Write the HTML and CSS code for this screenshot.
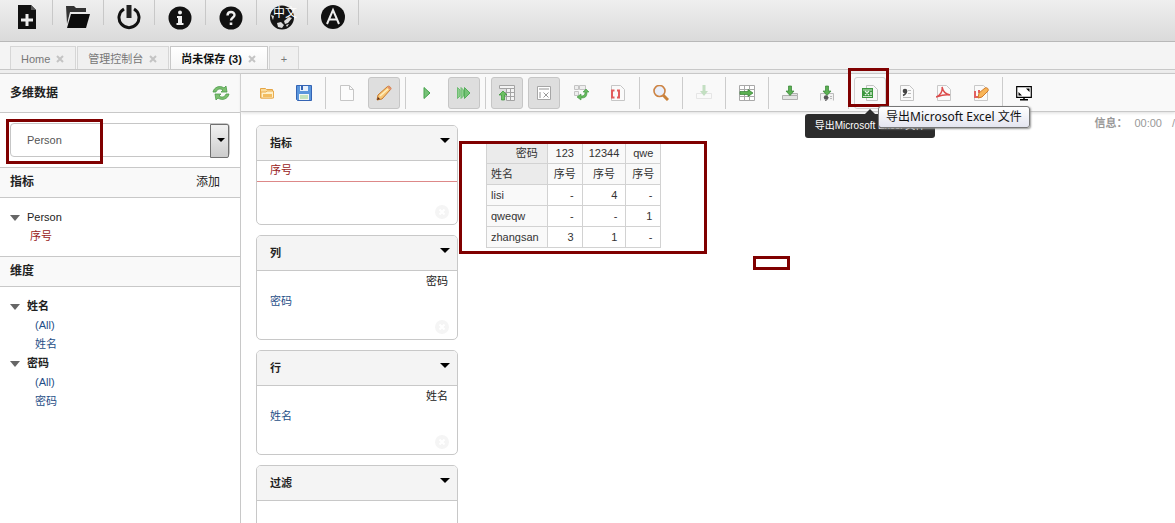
FILE: index.html
```html
<!DOCTYPE html>
<html lang="zh-CN">
<head>
<meta charset="utf-8">
<title>尚未保存 (3)</title>
<link rel="stylesheet" href="styles.css">
</head>
<body>
<div class="app">
  <header class="topbar">
    <button class="top-btn" aria-label="新建"><svg width="24" height="26" viewBox="0 0 24 26"><path d="M3 1h13l5 5v19H3z" fill="#111"/><path d="M16 1l5 5h-5z" fill="#555"/><path d="M12 10v12M6 16h12" stroke="#eee" stroke-width="3"/></svg></button>
    <button class="top-btn" aria-label="打开"><svg width="24" height="26" viewBox="0 0 24 26"><path d="M0 2h8l2 2h10v4H4L1 20z" fill="#333"/><path d="M5 10h19l-4 14H1z" fill="#0b0b0b"/></svg></button>
    <button class="top-btn" aria-label="退出"><svg width="24" height="26" viewBox="0 0 24 26"><path d="M7 5a10 10 0 1 0 10 0" fill="none" stroke="#111" stroke-width="3"/><path d="M12 1v13" stroke="#222" stroke-width="5"/></svg></button>
    <button class="top-btn" aria-label="信息"><svg width="24" height="26" viewBox="0 0 24 26"><circle cx="12" cy="14" r="11.5" fill="#111"/><circle cx="12" cy="8.500" r="2" fill="#eee"/><path d="M9 12h5v7h1.500v2h-7v-2H10v-5H9z" fill="#eee"/></svg></button>
    <button class="top-btn" aria-label="帮助"><svg width="24" height="26" viewBox="0 0 24 26"><circle cx="12" cy="14" r="11.5" fill="#111"/><path d="M8.500 11.500c0-4.500 7-4.500 7-.5 0 2.500-3.500 2.500-3.500 5.500" fill="none" stroke="#eee" stroke-width="2.400"/><path d="M10.700 18.500h2.600v2.500h-2.600z" fill="#eee"/></svg></button>
    <button class="top-btn lang" aria-label="语言"><svg width="24" height="26" viewBox="0 0 24 26"><circle cx="12" cy="13.500" r="12" fill="#161616"/><path d="M1 11l3 1-1 4zM7 19l4-1 3 3-2 3-4-1zM14 17l5-4 3 1-4 5-3 1zM16 21l3-1-2 3z" fill="#ddd"/></svg><span class="lang-text">中文</span></button>
    <button class="top-btn" aria-label="账户"><svg width="24" height="26" viewBox="0 0 24 26"><circle cx="12" cy="13" r="12" fill="#111"/><path d="M6 20l6-14 6 14M8.200 15.500h7.600" fill="none" stroke="#eee" stroke-width="2"/></svg></button>
  </header>

  <nav class="tabs">
    <a class="tab" href="#">Home<svg class="x" viewBox="0 0 8 8"><path d="M1 1l6 6M7 1L1 7"/></svg></a>
    <a class="tab" href="#">管理控制台<svg class="x" viewBox="0 0 8 8"><path d="M1 1l6 6M7 1L1 7"/></svg></a>
    <a class="tab active" href="#">尚未保存 (3)<svg class="x" viewBox="0 0 8 8"><path d="M1 1l6 6M7 1L1 7"/></svg></a>
    <a class="tab add" href="#">+</a>
  </nav>

  <div class="workspace">
    <aside class="sidebar">
      <div class="side-title"><h2>多维数据</h2>
        <button class="refresh" aria-label="刷新"><svg width="18" height="16" viewBox="0 0 18 16"><path d="M1 7c1-5 7-7 11-4l2-2 1 6H9l2-2C8 3 5 4 4 7z" fill="#7cc06f" stroke="#4c9a4c" stroke-width=".8"/><path d="M17 9c-1 5-7 7-11 4l-2 2-1-6h6l-2 2c3 2 6 1 7-2z" fill="#7cc06f" stroke="#4c9a4c" stroke-width=".8"/></svg></button>
      </div>
      <div class="cube">
        <div class="combo"><select aria-label="多维数据"><option>Person</option></select></div>
        <span class="mark mark-cube"></span>
      </div>
      <div class="side-head"><h2>指标</h2><button class="link-btn">添加</button></div>
      <ul class="tree">
        <li><span class="node">Person</span>
          <ul><li><a class="measure" href="#">序号</a></li></ul></li>
      </ul>
      <div class="side-head"><h2>维度</h2></div>
      <ul class="tree dims">
        <li><span class="node strong">姓名</span>
          <ul><li><a href="#">(All)</a></li><li><a href="#">姓名</a></li></ul></li>
        <li><span class="node strong">密码</span>
          <ul><li><a href="#">(All)</a></li><li><a href="#">密码</a></li></ul></li>
      </ul>
    </aside>

    <main class="main">
      <div class="toolbar">
        <button class="tool" aria-label="打开查询"><svg viewBox="0 0 16 16"><path d="M1.500 13V3.500h5l1 1h6V13z" fill="#fbdc9c" stroke="#e5a545"/><path d="M2 13V7h5l1-1h6.500v7z" fill="#fff0c8" stroke="#e9ad50"/><path d="M4 9h9v3H4z" fill="#f3bd60"/></svg></button>
        <button class="tool" aria-label="保存查询"><svg viewBox="0 0 16 16"><path d="M.5.500h15v15h-14l-1-1z" fill="#5a96dc" stroke="#3564b4"/><path d="M4 1h8v5H4z" fill="#e8f1fc"/><path d="M5 1h2v4H5z" fill="#3564b4"/><path d="M3 9h10v6H3z" fill="#f4f8f4"/><path d="M4 11h8M4 13h8" stroke="#93cf87"/></svg></button>
        <span class="sep"></span>
        <button class="tool" aria-label="新建查询"><svg viewBox="0 0 16 16"><path d="M1.500.500h9l4 4v11h-13z" fill="#fcfcfc" stroke="#c6c6c6"/><path d="M10.500.500v4h4" fill="none" stroke="#c6c6c6"/></svg></button>
        <button class="tool on" aria-label="编辑"><svg viewBox="0 0 16 16"><path d="M1 15l1-5L11.500 1.500c2-1 4 1 3 3L6 14z" fill="#f8c878" stroke="#c87a2c"/><path d="M4 11l8-7" stroke="#fff0c0" stroke-width="1.500"/><path d="M1 15l1-3 2 2z" fill="#5a2c18"/><path d="M12 1.500l3 3" stroke="#e08f70" stroke-width="2"/></svg></button>
        <span class="sep"></span>
        <button class="tool" aria-label="运行"><svg viewBox="0 0 16 16"><path d="M5 2.500l6 5.500-6 5.500z" fill="#76c277" stroke="#44a24b"/></svg></button>
        <button class="tool on" aria-label="自动运行"><svg viewBox="0 0 16 16"><path d="M1.500 2.500L4 5v6l-2.500 2.500zM5 2.500L7.500 5v6L5 13.500z" fill="#8fd08f" stroke="#6fbc73"/><path d="M8.500 2.500l5.500 5.500-5.500 5.500z" fill="#76c277" stroke="#55ae5a"/></svg></button>
        <span class="sep"></span>
        <button class="tool on" aria-label="隐藏父级"><svg viewBox="0 0 16 16"><path d="M.5.500h15v3H.500zM7.500 3.500h8v12h-8zM11.500 3.500v12M6 7.500h9.500M6 11.500h9.500" fill="#f3f3f3" stroke="#a3a3a3"/><path d="M4 6l4 4H5.500v5h-3v-5H0z" fill="#6cc062" stroke="#359035" stroke-width=".7"/></svg></button>
        <button class="tool on" aria-label="非空"><svg viewBox="0 0 16 16"><path d="M1.500 1.500h13v13h-13z" fill="#fff" stroke="#a6a6a6"/><path d="M3 3h10v2H3zM3 7h2v6H3z" fill="#c9c9c9"/><path d="M7.500 7.500l5 5M12.500 7.500l-5 5" stroke="#999"/></svg></button>
        <button class="tool" aria-label="交换轴"><svg viewBox="0 0 16 16"><path d="M1.500.500h4v4h-4zM6.500.500h6v4h-6zM1.500 6.500h4v4h-4z" fill="#eee" stroke="#c4c4c4"/><path d="M4 12l4-3v2c3 0 4-1 4-4h-2l3-3 3 3h-2c0 5-2 6-6 6v2z" fill="#66b85e" stroke="#3c963c" stroke-width=".6"/></svg></button>
        <button class="tool" aria-label="MDX"><svg viewBox="0 0 16 16"><path d="M1.500.500h9l4 4v11h-13z" fill="#fafafa" stroke="#c6c6c6"/><path d="M4.500 5.500H2v7h2.500M7 5.500h2v7H7" fill="none" stroke="#e25c5c" stroke-width="2"/></svg></button>
        <span class="sep"></span>
        <button class="tool" aria-label="放大"><svg viewBox="0 0 16 16"><path d="M10 10l5 5" stroke="#c9823b" stroke-width="3"/><circle cx="6.500" cy="6" r="5.500" fill="#e9effb" stroke="#cd8444" stroke-width="1.600"/></svg></button>
        <span class="sep"></span>
        <button class="tool faded" aria-label="钻取"><svg viewBox="0 0 16 16"><path d="M.5 8.500h15v5H.500z" fill="#fff" stroke="#bbb"/><path d="M6.500 0h3v6H12l-4 5-4-5h2.500z" fill="#4ba447"/></svg></button>
        <span class="sep"></span>
        <button class="tool" aria-label="钻透"><svg viewBox="0 0 16 16"><path d="M.5.500h15v15H.500zM.5 4.500h15M.5 11.500h15M5.500.500v15M10.500.500v15" fill="#fff" stroke="#a9a9a9"/><path d="M1 6.500h8v-2l5 3.500-5 3.500v-2H1z" fill="#5bb052" stroke="#338333" stroke-width=".7"/></svg></button>
        <span class="sep"></span>
        <button class="tool" aria-label="导出钻透"><svg viewBox="0 0 16 16"><path d="M.5 10.500h15v4H.500zM8 10.500v-2h7.500v2" fill="#e4e4e4" stroke="#b0b0b0"/><path d="M6.500 1h3v5H12l-4 4.500L4 6h2.500z" fill="#5bb052" stroke="#338333" stroke-width=".7"/></svg></button>
        <button class="tool" aria-label="导出钻透 CSV"><svg viewBox="0 0 16 16"><path d="M1.500 15.500v-7h13v7" fill="#f2f2f2" stroke="#bbb"/><path d="M6.500 1h3v5H12l-4 4.500L4 6h2.500z" fill="#5bb052" stroke="#338333" stroke-width=".7"/><circle cx="7" cy="12.500" r="2.200" fill="#555"/><path d="M9 12c0 2-1 3-3 4" fill="none" stroke="#555"/><path d="M11 11.500h2M11 13.500h2" stroke="#bbb"/></svg></button>
        <span class="sep"></span>
        <div class="tool-wrap">
          <button class="tool hover" aria-label="导出Microsoft Excel 文件" aria-describedby="tip"><svg viewBox="0 0 16 16"><path d="M4.500.500h7l4 4v11h-11z" fill="#f8f8f8" stroke="#c3c3c3"/><path d="M0 3h11v10H0z" fill="#3c973e"/><path d="M1 5h9M1 11.500h9" stroke="#c8e6c8"/><path d="M3 6l4 4M7 6l-4 4M9 7v3" stroke="#e4f5e4" stroke-width="1.300"/></svg></button>
          <span class="tip-dark" id="tip" role="tooltip">导出Microsoft Excel 文件</span>
          <span class="mark mark-tool"></span>
          <span class="tip-native">导出Microsoft Excel 文件</span>
        </div>
        <button class="tool" aria-label="导出 CSV"><svg viewBox="0 0 16 16"><path d="M1.500.500h9l4 4v11h-13z" fill="#fafafa" stroke="#c3c3c3"/><circle cx="6" cy="6" r="2.300" fill="#444"/><path d="M7.500 6c0 2.500-1 3.500-3.500 4.500" fill="none" stroke="#444" stroke-width="1.400"/><path d="M9 5.500h3M9 8.500h3M4 12.500h8" stroke="#bbb"/></svg></button>
        <button class="tool" aria-label="导出 PDF"><svg viewBox="0 0 16 16"><path d="M1.500.500h9l4 4v11h-13z" fill="#fafafa" stroke="#c9c9c9"/><path d="M0 12c4-1 7-6 6-10 1 5 3 7 8 8-5-1-8 0-14 2" fill="none" stroke="#dc4b4b" stroke-width="1.500"/></svg></button>
        <button class="tool" aria-label="统计图"><svg viewBox="0 0 16 16"><path d="M1.500.500h9l4 4v11h-13z" fill="#fafafa" stroke="#c9c9c9"/><path d="M2 6v6h6M6 5v3" fill="none" stroke="#e26161" stroke-width="2"/><path d="M5 13l1-5 6-5c2-1 4 1 3 3l-6 6z" fill="#f8b558" stroke="#d17c2d"/></svg></button>
        <span class="sep"></span>
        <button class="tool screen" aria-label="全屏"><svg viewBox="0 0 16 16"><path d="M.7 1.700h14.600v10.600H.700z" fill="#fff" stroke="#000" stroke-width="1.200"/><path d="M8 12v3M4 14.800h8" stroke="#000" stroke-width="1.500"/><path d="M10 3.500h3.500V7zM2.500 7v3.500H6z" fill="#000"/></svg></button>
      </div>

      <div class="body">
        <div class="zones">
          <section class="zone"><h3>指标<i class="caret"></i></h3>
            <div class="zone-body short"><a class="pill" href="#">序号</a><button class="clear" aria-label="清除"><svg viewBox="0 0 14 14"><circle cx="7" cy="7" r="7"/><path d="M4.500 4.500l5 5M9.500 4.500l-5 5"/></svg></button></div></section>
          <section class="zone"><h3>列<i class="caret"></i></h3>
            <div class="zone-body"><span class="dim">密码</span><a class="level" href="#">密码</a><button class="clear" aria-label="清除"><svg viewBox="0 0 14 14"><circle cx="7" cy="7" r="7"/><path d="M4.500 4.500l5 5M9.500 4.500l-5 5"/></svg></button></div></section>
          <section class="zone"><h3>行<i class="caret"></i></h3>
            <div class="zone-body"><span class="dim">姓名</span><a class="level" href="#">姓名</a><button class="clear" aria-label="清除"><svg viewBox="0 0 14 14"><circle cx="7" cy="7" r="7"/><path d="M4.500 4.500l5 5M9.500 4.500l-5 5"/></svg></button></div></section>
          <section class="zone"><h3>过滤<i class="caret"></i></h3><div class="zone-body"></div></section>
        </div>
        <div class="result">
          <p class="info"><b>信息：</b><span>00:00</span><span>/</span></p>
          <table class="grid">
            <thead>
              <tr><th class="corner right">密码</th><th>123</th><th>12344</th><th>qwe</th></tr>
              <tr><th class="corner">姓名</th><th>序号</th><th>序号</th><th>序号</th></tr>
            </thead>
            <tbody>
              <tr><th>lisi</th><td>-</td><td>4</td><td>-</td></tr>
              <tr><th>qweqw</th><td>-</td><td>-</td><td>1</td></tr>
              <tr><th>zhangsan</th><td>3</td><td>1</td><td>-</td></tr>
            </tbody>
          </table>
          <span class="mark mark-grid"></span>
          <span class="mark mark-small"></span>
        </div>
      </div>
    </main>
  </div>
</div>
</body>
</html>
```
FILE: styles.css
```css
* { box-sizing: border-box; }
body {
  margin: 0;
  background: #fff;
  color: #222;
  font: 11px/19px "Liberation Sans", "Noto Sans CJK SC", sans-serif;
}
a { color: #1f4f88; text-decoration: none; }
button { font: inherit; color: inherit; border: 0; padding: 0; background: none; }
svg { display: block; }
h2, h3, p, ul { margin: 0; padding: 0; }
ul { list-style: none; }
.app { display: flex; flex-direction: column; height: 100vh; overflow: hidden; }

.topbar {
  display: flex;
  flex: none;
  height: 42px;
  padding-left: 2px;
  background: linear-gradient(#efefef, #dadada);
  border-bottom: 1px solid #b8b8b8;
}
.top-btn {
  position: relative;
  display: flex;
  justify-content: center;
  width: 51px;
  height: 25px;
  padding-top: 4px;
  border-right: 1px solid #c8c8c8;
}
.top-btn svg { flex: none; }
.lang-text {
  position: absolute;
  left: 16px;
  top: 4px;
  color: #fff;
  font-size: 12px;
  line-height: 18px;
  white-space: nowrap;
}

.tabs {
  display: flex;
  flex: none;
  gap: 1px;
  height: 28px;
  padding: 4px 10px 0;
  background: #f4f4f4;
  border-bottom: 1px solid #c8c8c8;
}
.tab {
  display: flex;
  align-items: center;
  gap: 6px;
  padding: 2px 11px 0 10px;
  color: #777;
  background: #f0f0f0;
  border: 1px solid #d6d6d6;
  border-bottom: 0;
}
.tab.active { color: #111; font-weight: bold; background: linear-gradient(#fff, #f4f4f4); border-color: #c8c8c8; }
.tab.add { padding: 2px 11px 0; }
.x { width: 8px; height: 8px; fill: none; stroke: #c4c4c4; stroke-width: 2; }

.workspace {
  display: flex;
  flex: 1;
  min-height: 0;
  border-top: 3px solid #eee;
}
.sidebar { flex: none; width: 241px; border: solid #c8c8c8; border-width: 1px 1px 0 0; }
.side-title, .side-head {
  display: flex;
  align-items: center;
  justify-content: space-between;
  background: #f9f9f9;
  border-bottom: 1px solid #c8c8c8;
  padding: 0 10px;
}
.side-title { height: 39px; }
.side-head { height: 31px; padding-right: 20px; border-top: 1px solid #c8c8c8; }
h2 { font-size: 12px; line-height: 19px; }
.link-btn { font-size: 12px; }
.cube { position: relative; padding: 10px; }
.combo { position: relative; }
.combo select {
  display: block;
  width: 100%;
  height: 34px;
  padding: 0 24px 0 16px;
  font: inherit;
  color: #555;
  background: #fff;
  border: 1px solid #c6c6c6;
  border-radius: 4px;
  appearance: none;
}
.combo::before {
  content: "";
  position: absolute;
  top: 1px;
  right: 1px;
  width: 17px;
  height: 32px;
  border: 1px solid #707070;
  border-radius: 0 2px 2px 0;
  background: linear-gradient(#f2f2f2, #ccc);
  pointer-events: none;
}
.combo::after {
  content: "";
  position: absolute;
  top: 15px;
  right: 5px;
  border: 4px solid transparent;
  border-top-color: #000;
  border-bottom: 0;
  pointer-events: none;
}
.tree { padding: 10px; }
.tree ul { padding-left: 20px; }
.dims ul { padding-left: 25px; }
.node { display: flex; align-items: center; gap: 7px; }
.node::before { content: ""; border: 5px solid transparent; border-top: 6px solid #666; border-bottom: 0; }
.strong { font-weight: bold; }
.measure, .pill { color: #992222; }

.main { display: flex; flex: 1; flex-direction: column; min-width: 0; }
.toolbar {
  display: flex;
  flex: none;
  gap: 5px;
  height: 39px;
  padding: 3px 10px;
  background: #f9f9f9;
  border: solid #c8c8c8;
  border-width: 1px 0;
  box-shadow: 0 1px 3px #ddd;
}
.tool {
  display: flex;
  flex: none;
  align-items: center;
  justify-content: center;
  width: 32px;
  height: 32px;
  border: 1px solid transparent;
  border-radius: 3px;
}
.tool svg { width: 16px; height: 16px; }
.tool.on { background: #dedede; border-color: #c6c6c6; }
.tool.hover { border-color: #d0d0d0; }
.tool.faded { opacity: .3; }
.sep { flex: none; width: 1px; height: 32px; background: #ccc; }
.tool-wrap { position: relative; z-index: 2; }
.tip-dark {
  position: absolute;
  left: -49px;
  top: 37px;
  width: 130px;
  border-radius: 3px;
  background: #2c2c2c;
  color: #fff;
  font-size: 10px;
  line-height: 24px;
  text-align: center;
  white-space: nowrap;
}
.tip-dark::before {
  content: "";
  position: absolute;
  left: 60px;
  top: -5px;
  border: 5px solid transparent;
  border-top: 0;
  border-bottom-color: #2c2c2c;
}
.tip-native {
  position: absolute;
  left: 24px;
  top: 29px;
  padding: 0 7px;
  border: 1px solid #777;
  border-radius: 3px;
  background: linear-gradient(#fff, #e4e5f0);
  box-shadow: 1px 1px 2px #999;
  color: #111;
  font: 12px/20px "Noto Sans", "Noto Sans CJK SC", sans-serif;
  white-space: nowrap;
}
.mark { position: absolute; border: 3px solid #800000; pointer-events: none; }
.mark-cube { left: 6px; top: 6px; width: 97px; height: 45px; }
.mark-tool { left: -6px; top: -9px; width: 41px; height: 39px; }
.mark-grid { left: 1px; top: 29px; width: 248px; height: 113px; }
.mark-small { left: 295px; top: 144px; width: 37px; height: 14px; }

.body { display: flex; flex: 1; min-height: 0; }
.zones { flex: none; width: 217px; padding: 13px 0 0 15px; display: flex; flex-direction: column; gap: 10px; }
.zone { flex: none; border: 1px solid #c8c8c8; border-radius: 5px; overflow: hidden; }
h3 {
  display: flex;
  justify-content: space-between;
  height: 35px;
  padding: 8px 7px 0 13px;
  font-size: 11px;
  background: #f4f4f4;
  border-bottom: 1px solid #c8c8c8;
}
.caret { align-self: flex-start; margin-top: 4px; border: 5px solid transparent; border-top-color: #000; border-bottom: 0; }
.zone-body { display: flex; flex-direction: column; height: 68px; }
.zone-body.short { height: 63px; }
.pill { padding: 0 13px 1px; border-bottom: 1px solid #d88; }
.dim { padding-right: 9px; text-align: right; line-height: 20px; }
.level { padding-left: 13px; line-height: 20px; }
.clear { align-self: flex-end; margin: auto 8px 5px 0; }
.clear svg { width: 14px; height: 14px; fill: #f5f5f5; stroke: #fff; stroke-width: 2; }
.clear circle { stroke: none; }
.result { position: relative; flex: 1; min-width: 0; padding-left: 28px; }
.info { display: flex; justify-content: flex-end; gap: 10px; height: 30px; padding-top: 2px; color: #999; }
.info b { width: 30px; white-space: nowrap; }
.grid { border-collapse: collapse; line-height: 20px; color: #333; }
.grid th, .grid td { padding: 0 8px 0 4px; border: 1px solid #d2d2d2; text-align: right; }
.grid th { font-weight: normal; text-align: left; background: #f9f9f9; }
.grid thead th { padding: 0 6px; text-align: center; }
.grid thead .corner { background: #ebebeb; text-align: left; padding-left: 4px; }
.grid thead .right { text-align: right; padding-right: 9px; }
```
